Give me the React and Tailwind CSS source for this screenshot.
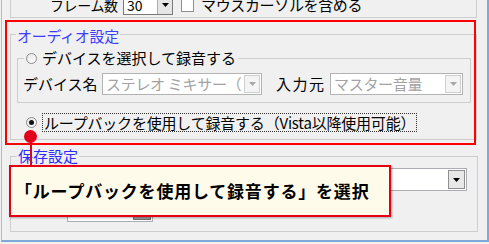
const Arrow = ({ color = "#000" }) => (
  <svg width="7" height="4" viewBox="0 0 7 4">
    <path d="M0 0H7L3.5 4Z" fill={color} />
  </svg>
);

const Radio = ({ checked }) => (
  <span className="flex h-[11px] w-[11px] shrink-0 items-center justify-center rounded-full border border-[#8a8a8a] bg-gradient-to-br from-[#e6e6e6] to-white">
    {checked && <span className="h-[5px] w-[5px] rounded-full bg-[#111]" />}
  </span>
);

// disabled combo box
const DisabledCombo = ({ text, width }) => (
  <div className={`flex h-[22px] items-center border border-[#b3b3b3] bg-white ${width}`}>
    <span className="flex-1 overflow-hidden whitespace-nowrap pl-[3px] text-[15px] leading-[18px] tracking-[-0.3px] text-[#a3a3a3]">
      {text}
    </span>
    <span className="mr-[1px] flex h-[18px] w-[16px] shrink-0 items-center justify-center border border-[#cfcfcf] bg-[#f4f4f4]">
      <Arrow color="#a8a8a8" />
    </span>
  </div>
);

export default function App() {
  return (
    <div className="relative h-[244px] w-[489px] overflow-hidden bg-[#f0f0f0] font-['Noto_Sans_CJK_JP','Noto_Sans',sans-serif] text-black">
      <div className="ml-[1px] flex h-[242px] w-[488px] flex-col border-b-2 border-l border-r-2 border-b-[#7fa9d9] border-l-[#b4bcc6] border-r-[#7fa9d9]">
        {/* capture group (top, cut off) */}
        <div className="ml-[8px] mt-[-10px] h-[28px] w-[467px] shrink-0 border-x border-b border-[#cdcdcd] pt-[5px]">
          <div className="ml-[39px] flex h-[20px] items-center">
            <span className="w-[68px] whitespace-nowrap text-[14px] leading-[16px] tracking-[-0.4px]">フレーム数</span>
            <div className="ml-[5px] flex h-[20px] w-[50px] items-center border border-[#7a7a7a] bg-white">
              <span className="flex-1 pl-[3px] text-[14px] leading-[16px]">30</span>
              <span className="flex h-full w-[15px] items-center justify-center border-l border-[#acacac] bg-[#e5e5e5]">
                <Arrow />
              </span>
            </div>
            <span className="ml-[8px] h-[13px] w-[13px] border border-[#8e8f8f] bg-white" />
            <span className="ml-[7px] whitespace-nowrap text-[15px] leading-[16px] tracking-[-0.35px]">マウスカーソルを含める</span>
          </div>
        </div>

        {/* audio settings */}
        <fieldset className="ml-[8px] mt-[6px] h-[116px] w-[467px] min-w-0 shrink-0 border border-[#cdcdcd]">
          <legend className="ml-[5px] px-[1px] pt-[4px] text-[15px] leading-[16px] tracking-[-0.3px] text-[#3c3cff]">
            オーディオ設定
          </legend>

          <fieldset className="ml-[6px] mt-[5px] h-[54px] w-[454px] min-w-0 border border-[#cdcdcd]">
            <legend className="ml-[6px] flex h-[18px] items-center px-[2px]">
              <Radio />
              <span className="ml-[5px] whitespace-nowrap text-[15px] leading-[16px]">デバイスを選択して録音する</span>
            </legend>
            <div className="ml-[5px] mt-[6px] flex h-[22px] items-center">
              <span className="w-[75px] whitespace-nowrap text-[15px] leading-[16px]">デバイス名</span>
              <div className="ml-[4px]">
                <DisabledCombo text="ステレオ ミキサー（Ｒ" width="w-[160px]" />
              </div>
              <span className="ml-[14px] w-[50px] whitespace-nowrap text-[15px] leading-[16px] tracking-[1.5px]">入力元</span>
              <div className="ml-[4px]">
                <DisabledCombo text="マスター音量" width="w-[133px]" />
              </div>
            </div>
          </fieldset>

          <div className="ml-[15px] mt-[10px] flex h-[19px] items-center">
            <Radio checked />
            <span className="ml-[5px] flex h-[19px] items-center border border-dotted border-[#333] px-[1px]">
              <span className="whitespace-nowrap text-[15px] leading-[17px] tracking-[-0.2px]">
                ループバックを使用して録音する（Vista以降使用可能）
              </span>
            </span>
          </div>
        </fieldset>

        {/* save settings */}
        <fieldset className="ml-[8px] mt-[8px] h-[84px] w-[468px] min-w-0 shrink-0 border border-[#cdcdcd]">
          <legend className="ml-[6px] px-[1px] text-[15px] leading-[16px] text-[#2b2bff]">保存設定</legend>
          <div className="ml-[56px] mt-[4px] flex h-[23px] w-[400px] items-center border border-[#abadb3] bg-white">
            <span className="flex-1" />
            <span className="mr-[1px] flex h-[19px] w-[17px] items-center justify-center border border-[#8f8f8f] bg-[#e8e8e8]">
              <Arrow />
            </span>
          </div>
          <div className="ml-[56px] mt-[8px] flex h-[23px] w-[86px] items-center border border-[#abadb3] bg-white">
            <span className="flex-1" />
            <span className="mr-[1px] h-[19px] w-[18px] border border-[#707070] bg-[#9a9a9a]" />
          </div>
        </fieldset>
      </div>

      {/* annotation */}
      <div className="absolute left-[5px] top-[20px] h-[125px] w-[471px] border-2 border-[#ff0000]" />
      <div className="absolute left-[30px] top-[137px] h-[29px] w-[2px] bg-[#e2001a]" />
      <div className="absolute left-[24px] top-[130px] h-[13px] w-[13px] rounded-full bg-[#e2001a]" />
      <div className="absolute left-[9px] top-[165px] flex h-[52px] w-[382px] items-center border-2 border-[#e60012] bg-[#fffbea] pl-[4px] shadow-[1px_1px_2px_rgba(0,0,0,0.3)]">
        <span className="whitespace-nowrap text-[17px] font-bold leading-[20px] tracking-[0.8px]">
          「ループバックを使用して録音する」を選択
        </span>
      </div>
    </div>
  );
}
